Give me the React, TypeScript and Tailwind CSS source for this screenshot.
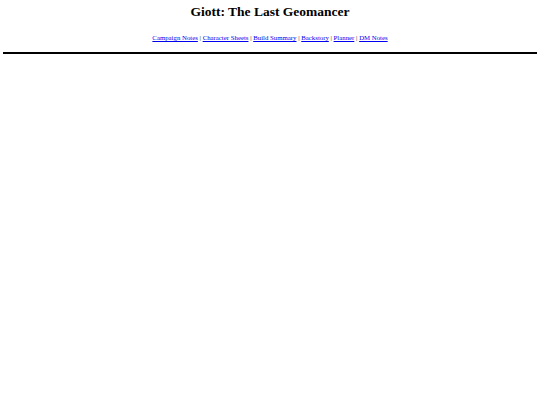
export default function App() {
  const links = ["Campaign Notes", "Character Sheets", "Build Summary", "Backstory", "Planner", "DM Notes"];

  return (
    <div className="min-h-screen bg-white px-[3px] text-black font-['Liberation_Serif',serif]">
      <h1 className="pt-[5px] text-center text-[13.5px] font-bold leading-[14px]">Giott: The Last Geomancer</h1>
      <nav className="mt-[14px] text-center text-[6.8px] leading-[9px]">
        {links.map((l, i) => (
          <span key={l}>
            {i > 0 && " | "}
            <a href="#" className="text-[#0000ee] underline">{l}</a>
          </span>
        ))}
      </nav>
      <hr className="mt-[10px] border-t-[2px] border-black" />
    </div>
  );
}
